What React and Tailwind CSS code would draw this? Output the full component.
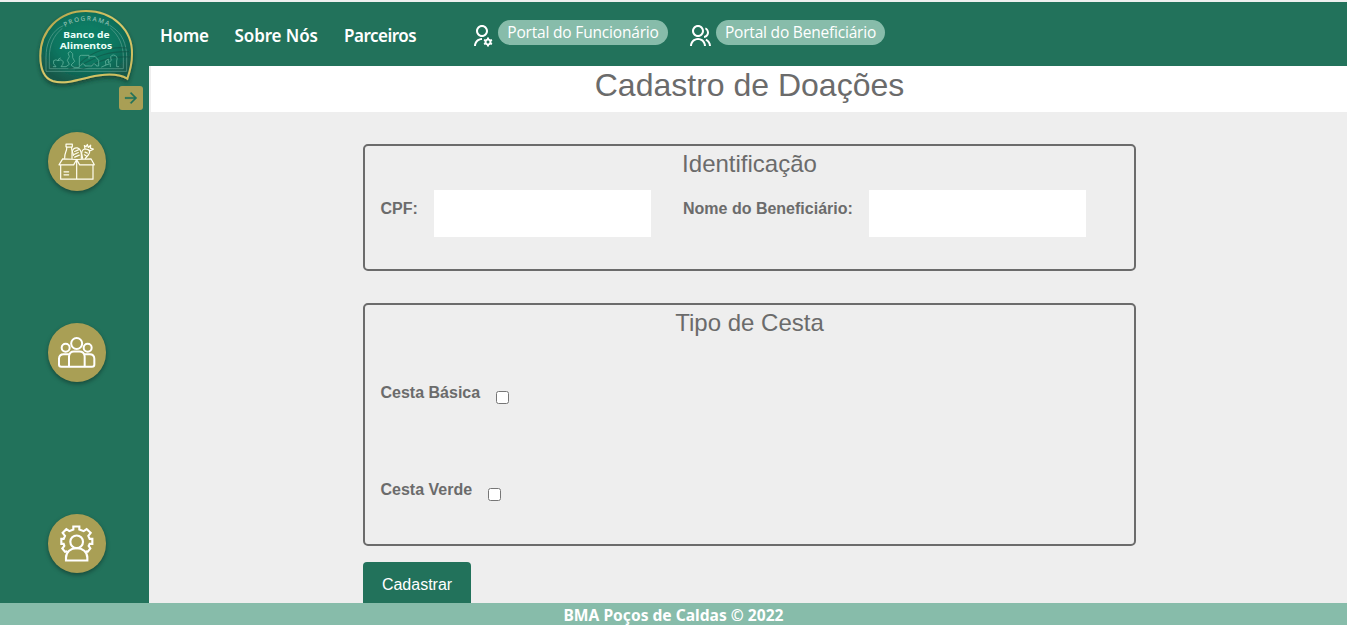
import React from "react";
import { RiArrowRightLine, RiGroupLine, RiUserSettingsLine } from "react-icons/ri";

function Logo() {
  return (
    <svg viewBox="105 20 306 252" className="h-[84px] w-[102px] shrink-0 overflow-visible" fill="none">
      <defs>
        <radialGradient id="badge" cx="50%" cy="42%" r="60%">
          <stop offset="0" stopColor="#078369" />
          <stop offset="0.55" stopColor="#087660" />
          <stop offset="1" stopColor="#17594a" />
        </radialGradient>
        <linearGradient id="rim" x1="0" y1="0" x2="1" y2="1">
          <stop offset="0" stopColor="#b09f45" />
          <stop offset="0.5" stopColor="#d9c96a" />
          <stop offset="1" stopColor="#c9ba5c" />
        </linearGradient>
        <filter id="drop" x="-20%" y="-20%" width="140%" height="150%">
          <feDropShadow dx="0" dy="8" stdDeviation="7" floodColor="#0a3027" floodOpacity="0.65" />
        </filter>
        <path id="arc" d="M195 80Q258 42 332 80" />
      </defs>
      <path
        filter="url(#drop)"
        d="M258 32C338 32 398 88 396 162C396 190 389 215 382 235C349 216 305 222 267 231C226 241 189 252 158 242C130 232 121 200 121 166C121 91 177 32 258 32Z"
        fill="url(#badge)"
        stroke="url(#rim)"
        strokeWidth="6"
      />
      <g stroke="#70ad9d" strokeWidth="2.4" opacity="0.7">
        <path d="M190 76L178 82C151 101 138 133 138 170V213H380V170C380 130 365 99 339 82L328 74" />
        <path d="M187 84C160 105 148 136 148 170V205H370V170C370 135 357 105 331 83" />
      </g>
      <g stroke="#124f43" strokeWidth="3.5" opacity="0.55">
        <path d="M205 205C255 205 280 150 387 154" />
        <path d="M225 209C275 209 295 164 390 170" />
        <path d="M238 190C280 150 325 138 382 143" />
      </g>
      <g stroke="#62b29c" strokeWidth="2.4" strokeLinecap="round" strokeLinejoin="round">
        <path d="M160 199H168Q157 190 161 181Q168 176 174 181Q184 174 190 184Q190 193 183 199H198L208 192L202 180L208 169L204 158L211 153L218 160V172L224 183L213 194L222 201H238V171Q238 165 244 165H267V174" />
        <path d="M174 181Q174 174 181 173M242 196C244 188 254 189 255 197H276C278 188 288 189 289 197H296V180L285 168H269M305 200L318 194L316 182L325 176V188L334 180Q328 164 341 164Q355 167 350 182V199H356M318 194L331 190V199" />
      </g>
      <text fill="#8abcae" fontFamily="Open Sans, sans-serif" fontSize="19" fontWeight="600">
        <textPath href="#arc" textLength="136">PROGRAMA</textPath>
      </text>
      <text x="259" y="112" textAnchor="middle" textLength="139" lengthAdjust="spacingAndGlyphs" fill="#eafff8" fontFamily="Noto Sans, sans-serif" fontSize="27.5" fontWeight="700">Banco de</text>
      <text x="258" y="146" textAnchor="middle" textLength="158" lengthAdjust="spacingAndGlyphs" fill="#eafff8" fontFamily="Noto Sans, sans-serif" fontSize="27.5" fontWeight="700">Alimentos</text>
    </svg>
  );
}

function BoxIcon() {
  return (
    <svg viewBox="36 36 174 174" className="h-full w-full" fill="none" stroke="#fffef0" strokeWidth="3.6" strokeLinejoin="round" strokeLinecap="round">
      <path d="M74 134V176H171V134M122 117V176M80 115L122 117L165 115L175 133H131L122 117L113 133H69L80 115ZM84 154H98M84 163H98" />
      <path d="M86 113C85 100 91 94 92 85V79H90V71H109V79H107V85C107 94 112 96 112 105M92 80H107" />
      <path d="M108 114V97C109 85 116 81 124 82C133 85 136 92 136 103V114M116 93L127 88M114 102L127 96M116 110L130 104" />
      <path d="M140 114L137 99C137 89 143 84 151 86C160 87 164 94 158 102L148 114M147 86L145 75L150 79L154 72L157 81L164 74L163 83L172 86L163 91L156 87M147 95L154 98M145 103L150 106" />
    </svg>
  );
}

function PeopleIcon() {
  return (
    <svg viewBox="36 33 174 174" className="h-full w-full" fill="none" stroke="white" strokeWidth="6" strokeLinejoin="round">
      <circle cx="122" cy="93" r="16.5" />
      <circle cx="89" cy="106" r="12" />
      <circle cx="155" cy="106" r="12" />
      <path d="M99 163V132Q100 117 114 117H130Q145 117 146 132V163M101 125H83Q69 125 69 139V156Q69 163 76 163H168Q175 163 175 156V139Q175 125 161 125H143" />
    </svg>
  );
}

function GearPersonIcon() {
  return (
    <svg viewBox="36 33 174 174" className="h-full w-full" fill="none" stroke="white" strokeWidth="6.4" strokeLinejoin="miter">
      <path d="M94 143L87 145L79 135L85 127L83 121H76V106H83L87 97L80 88L91 77L100 83L112 78V69H130V78L143 83L152 77L164 88L157 97L161 106H169V121H161L158 127L163 135L155 145L149 143" />
      <circle cx="122" cy="115" r="19" />
      <path d="M90 171V163C90 145 104 134 122 134C140 134 154 145 154 163V171Z" />
    </svg>
  );
}

function SideButton({ label, children }) {
  return (
    <button aria-label={label} className="ml-12 h-[59px] w-[58px] shrink-0 rounded-full bg-[#a99f55] shadow-[0_2px_4px_rgba(0,0,0,0.35)]">
      {children}
    </button>
  );
}

function Portal({ icon, children, width }) {
  return (
    <a href="#" className="flex items-start gap-1">
      <span className="mt-1">{icon}</span>
      <span className={`${width} flex h-[25px] items-center justify-center rounded-full bg-[#87bcaa] font-['Open_Sans','Noto_Sans',sans-serif] leading-[27px] whitespace-nowrap text-white`}>
        {children}
      </span>
    </a>
  );
}

export default function App() {
  return (
    <div className="flex h-[625px] w-full flex-col overflow-hidden bg-[#eeeeee] font-['Liberation_Sans',Arial,sans-serif] text-[#6b6b6b]">
      <header className="flex h-[66px] shrink-0 border-t-2 border-[#eef0ef] bg-[#22725b] text-white">
        <div className="z-10 flex w-[149px] shrink-0 pt-[5px] pl-[35px]">
          <Logo />
        </div>
        <nav className="flex w-[321px] pt-[21px] pl-[11px] font-['Noto_Sans',sans-serif] text-[17px] leading-[26px] font-semibold whitespace-nowrap">
          <a href="#" className="w-[74.5px] tracking-[-0.2px]">Home</a>
          <a href="#" className="w-[109.5px] tracking-[-0.1px]">Sobre Nós</a>
          <a href="#" className="tracking-[-0.5px]">Parceiros</a>
        </nav>
        <div className="flex gap-5 pt-[18px]">
          <Portal width="w-[170px] text-[15.5px] tracking-[-0.18px]" icon={<RiUserSettingsLine className="size-6" />}>Portal do Funcionário</Portal>
          <Portal width="w-[169px] text-[15.5px] tracking-[-0.2px]" icon={<RiGroupLine className="size-6" />}>Portal do Beneficiário</Portal>
        </div>
      </header>

      <div className="flex h-[537px] shrink-0">
        <aside className="flex w-[149px] shrink-0 flex-col bg-[#22725b] pt-5">
          <button aria-label="Expandir" className="ml-[119px] flex size-6 shrink-0 items-center justify-center rounded-[3px] bg-[#a99f55] text-[#22725b]">
            <RiArrowRightLine className="size-[18px] stroke-current stroke-[0.4]" />
          </button>
          <div className="mt-[22px] flex flex-col gap-[132px]">
            <SideButton label="Doações"><BoxIcon /></SideButton>
            <SideButton label="Beneficiários"><PeopleIcon /></SideButton>
            <SideButton label="Configurações"><GearPersonIcon /></SideButton>
          </div>
        </aside>

        <main className="flex flex-1 flex-col overflow-hidden pl-0.5">
          <h1 className="h-[46px] shrink-0 bg-white pl-px text-center text-[32px] leading-[38px]">Cadastro de Doações</h1>
          <form className="ml-[212px] flex w-[773px] flex-col pt-8">
            <section className="h-[127px] shrink-0 rounded-[5px] border-2 border-[#6b6b6b]">
              <h2 className="pt-1 text-center text-2xl leading-7">Identificação</h2>
              <div className="mt-3 flex pl-[15.5px] font-bold">
                <label htmlFor="cpf" className="w-[53.5px] pt-[9px] leading-5">CPF:</label>
                <input id="cpf" className="h-[47px] w-[217px] bg-white" />
                <label htmlFor="nome" className="ml-8 w-[186px] pt-[9px] leading-5 whitespace-nowrap">Nome do Beneficiário:</label>
                <input id="nome" className="h-[47px] w-[217px] bg-white" />
              </div>
            </section>
            <section className="mt-8 h-[243px] shrink-0 rounded-[5px] border-2 border-[#6b6b6b]">
              <h2 className="pt-1 text-center text-2xl leading-7">Tipo de Cesta</h2>
              <div className="mt-[46px] flex flex-col gap-[77px] pl-[15.5px] font-bold">
                <label className="flex h-5 gap-4 leading-5">
                  Cesta Básica
                  <input type="checkbox" className="mt-[8px] size-[13px]" />
                </label>
                <label className="flex h-5 gap-4 leading-5">
                  Cesta Verde
                  <input type="checkbox" className="mt-[8px] size-[13px]" />
                </label>
              </div>
            </section>
            <button type="button" className="mt-4 h-[45px] w-[108px] shrink-0 rounded bg-[#22725b] text-base text-white">Cadastrar</button>
          </form>
        </main>
      </div>

      <footer className="h-[22px] shrink-0 bg-[#87bcaa] text-center font-['Noto_Sans',sans-serif] text-[15.6px] leading-[25px] font-bold text-white">
        BMA Poços de Caldas © 2022
      </footer>
    </div>
  );
}
